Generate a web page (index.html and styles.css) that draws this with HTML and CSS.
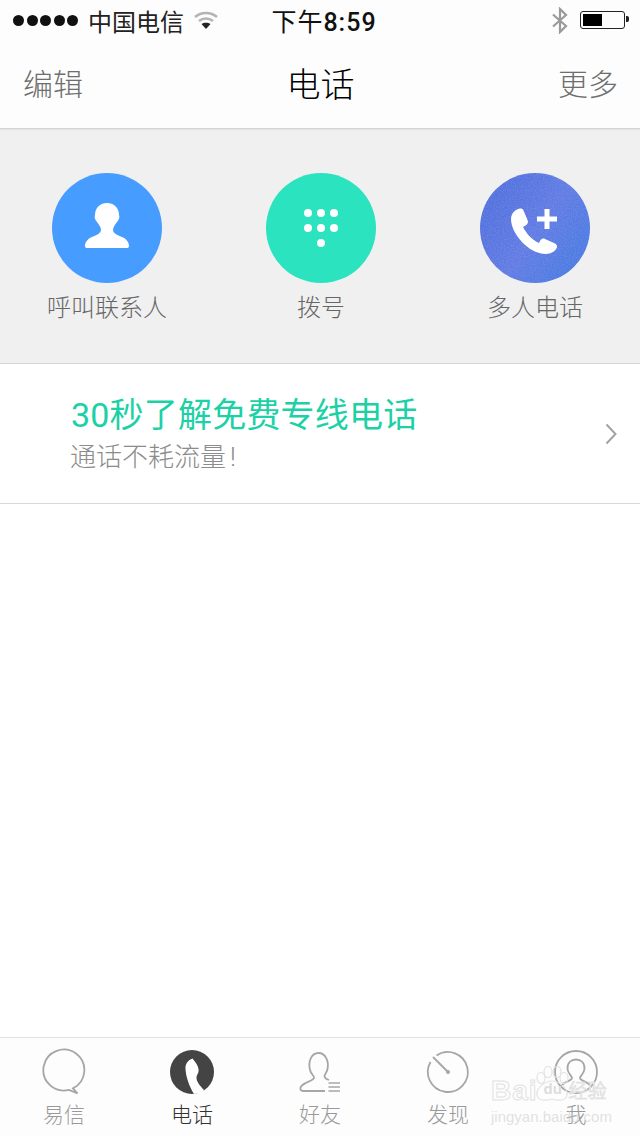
FILE: index.html
```html
<!DOCTYPE html>
<html>
<head>
<meta charset="UTF-8">
<title>电话</title>
<link rel="stylesheet" href="styles.css">
</head>
<body>
<div class="screen">

<header class="top">
	<div class="status">
		<div class="status-left">
			<span class="signal"><i></i><i></i><i></i><i></i><i></i></span>
			<span class="carrier">中国电信</span>
			<svg class="wifi" width="26" height="20" viewBox="0 0 26 20">
				<path d="M2 7 C8 1.500 18 1.500 24 7" fill="none" stroke="#b4b4b4" stroke-width="2.500"/>
				<path d="M6 11 C10 7.500 16 7.500 20 11" fill="none" stroke="#b4b4b4" stroke-width="2.500"/>
				<path d="M8.500 14 L13 19 L17.500 14 C15 12.300 11 12.300 8.500 14Z" fill="#222"/>
			</svg>
		</div>
		<div class="status-time">下午<span class="status-digits">8:59</span></div>
		<div class="status-right">
			<svg class="bt" width="18" height="27" viewBox="0 0 18 27">
				<path d="M2 7.500 L15 19 L9 25 V2 L15 8 L2 19.500" fill="none" stroke="#9a9a9a" stroke-width="2.200"/>
			</svg>
			<span class="battery"><span class="battery-level"></span></span>
		</div>
	</div>
	<nav class="nav">
		<a class="nav-btn">编辑</a>
		<h1 class="nav-title">电话</h1>
		<a class="nav-btn">更多</a>
	</nav>
</header>

<section class="actions">
	<div class="action">
		<svg class="action-icon" width="110" height="110" viewBox="0 0 110 110">
			<circle cx="55" cy="55" r="55" fill="#479cff"/>
			<path fill="#fff" d="M55 30 C63 30 67 36 67 42 C68 44 67 47 65 49 C63 52 61 54 61 57 C61 60 65 62 70 64 C75 66 77 70 77 73 C77 74.500 76 75 75 75 L35 75 C34 75 33 74.500 33 73 C33 70 35 66 40 64 C45 62 49 60 49 57 C49 54 47 52 45 49 C43 47 42 44 43 42 C43 36 47 30 55 30Z"/>
		</svg>
		<span class="action-label">呼叫联系人</span>
	</div>
	<div class="action">
		<svg class="action-icon" width="110" height="110" viewBox="0 0 110 110">
			<circle cx="55" cy="55" r="55" fill="#2be3be"/>
			<g fill="#fff">
				<circle cx="42" cy="40" r="4"/><circle cx="55" cy="40" r="4"/><circle cx="68" cy="40" r="4"/>
				<circle cx="42" cy="55" r="4"/><circle cx="55" cy="55" r="4"/><circle cx="68" cy="55" r="4"/>
				<circle cx="55" cy="70" r="4"/>
			</g>
		</svg>
		<span class="action-label">拨号</span>
	</div>
	<div class="action">
		<svg class="action-icon" width="110" height="110" viewBox="0 0 110 110">
			<defs>
				<linearGradient id="blueWash" x1="0" y1="0.200" x2="1" y2="0.900">
					<stop offset="0" stop-color="#4e6edd"/>
					<stop offset="0.500" stop-color="#5f7ae3"/>
					<stop offset="1" stop-color="#4479e2"/>
				</linearGradient>
				<filter id="grain" x="0" y="0" width="100%" height="100%">
					<feTurbulence type="fractalNoise" baseFrequency="0.9" numOctaves="2" seed="4"/>
					<feColorMatrix values="0 0 0 0 1  0 0 0 0 1  0 0 0 0 1  0 0 0 0.250 -0.080"/>
					<feComposite in2="SourceGraphic" operator="in"/>
				</filter>
			</defs>
			<circle cx="55" cy="55" r="55" fill="url(#blueWash)"/>
			<circle cx="55" cy="55" r="55" filter="url(#grain)"/>
			<path fill="#fff" d="M40 35.500 C35 36 31 41 31 46 C31 60 48 81 66 81 C71 81 76 78 77 74 C77.500 72 76 71 74 70 L65 66 C63 65 61 66 60 68 L59 70 C52 67 46 60 43 54 L45.500 52.500 C48 51 48.500 49 47.500 47 L43.500 37.500 C43 36 42 35.500 40 35.500Z"/>
			<path fill="#fff" d="M64.500 36 H69.500 V43.500 H77 V48.500 H69.500 V56 H64.500 V48.500 H57 V43.500 H64.500Z"/>
		</svg>
		<span class="action-label">多人电话</span>
	</div>
</section>

<a class="promo">
	<div class="promo-text">
		<div class="promo-title">30秒了解免费专线电话</div>
		<div class="promo-sub">通话不耗流量<span class="promo-bang">!</span></div>
	</div>
	<svg class="chevron" width="12" height="22" viewBox="0 0 12 22">
		<path d="M1.500 1.500 L10.500 11 L1.500 20.500" fill="none" stroke="#a2a2a2" stroke-width="2"/>
	</svg>
</a>

<div class="blank"></div>

<footer class="tabs">
	<div class="tab">
		<svg width="48" height="48" viewBox="0 0 48 48" class="tab-icon">
			<path d="M29 41.900 A20.500 20.500 0 1 1 33 40.400 L37.500 45.300 Z" fill="none" stroke="#a6a6a6" stroke-width="1.800"/>
		</svg>
		<span class="tab-label">易信</span>
	</div>
	<div class="tab tab-on">
		<svg width="48" height="48" viewBox="0 0 48 48" class="tab-icon">
			<circle cx="24" cy="24" r="22" fill="#444"/>
			<path fill="#fff" d="M24.500 10.500 C20 12 17 16 17.500 21 C18 29 21 38 26 46 L34 44.500 L36 42 C32 38 28 33 28.500 29 C29 26 31 25 30.500 21 C30 17 27 14 24.500 10.500Z"/>
		</svg>
		<span class="tab-label">电话</span>
	</div>
	<div class="tab">
		<svg width="48" height="48" viewBox="0 0 48 48" class="tab-icon">
			<path d="M29 43 H7 C4 43 3.500 40 5.500 38 C9 34 17 33 18 30 C18.500 28 15 26 14 22 C12 14 15 5 22.500 5 C30 5 33 14 31.500 21 C31 24 29 26 28.500 28 C28.500 30 30 31 33 32" fill="none" stroke="#a6a6a6" stroke-width="1.800"/>
			<path d="M32.500 35 H44 M32.500 39 H44 M32.500 43 H44" fill="none" stroke="#a6a6a6" stroke-width="1.600"/>
		</svg>
		<span class="tab-label">好友</span>
	</div>
	<div class="tab">
		<svg width="48" height="48" viewBox="0 0 48 48" class="tab-icon">
			<path d="M12.500 7.500 A20 20 0 1 1 6.500 14" fill="none" stroke="#a6a6a6" stroke-width="1.800"/>
			<path d="M9 9 L24 24" stroke="#a6a6a6" stroke-width="1.800"/>
			<circle cx="24" cy="24" r="2" fill="#a6a6a6"/>
		</svg>
		<span class="tab-label">发现</span>
	</div>
	<div class="tab">
		<svg width="48" height="48" viewBox="0 0 48 48" class="tab-icon">
			<circle cx="24" cy="24" r="21" fill="none" stroke="#a6a6a6" stroke-width="1.800"/>
			<path d="M9 38 C13 33 20 33 20 30 C20 28 16 26 15.500 21 C15 15 19 11.500 24 11.500 C29 11.500 33 15 32.500 21 C32 26 28 28 28 30 C28 33 35 33 39 38" fill="none" stroke="#a6a6a6" stroke-width="1.800"/>
		</svg>
		<span class="tab-label">我</span>
	</div>
</footer>

<!-- 水印 -->
<div class="mark">
	<div class="mark-row">
		<span class="mark-bai">Bai</span>
		<span class="mark-paw">
			<svg width="34" height="40" viewBox="0 0 34 40">
				<g fill="none" stroke="#e2e2e2" stroke-width="1.200">
					<ellipse cx="6" cy="12" rx="4" ry="5.500"/>
					<ellipse cx="13" cy="6" rx="4" ry="5.500"/>
					<ellipse cx="22" cy="6" rx="4" ry="5.500"/>
					<ellipse cx="29" cy="12" rx="4" ry="5.500"/>
					<path d="M17 15 C24 15 33 22 32 29 C31 35 24 35 17 33 C10 35 3 35 2 29 C1 22 10 15 17 15Z"/>
				</g>
			</svg>
			<span class="mark-du">du</span>
		</span>
		<span class="mark-jy">经验</span>
	</div>
	<div class="mark-url">jingyan.baidu.com</div>
</div>

</div>
</body>
</html>
```

FILE: styles.css
```css
html, body {
  margin: 0;
  padding: 0;
  background: #fff;
}
body {
  font-family: Roboto, "Noto Sans CJK SC", sans-serif;
  font-weight: 300;
}
.screen {
  position: relative;
  width: 640px;
  height: 1136px;
  overflow: hidden;
  display: flex;
  flex-direction: column;
}

/* 상단 */
.top {
  height: 128px;
  flex: none;
  background: #fdfdfd;
  border-bottom: 1px solid #d4d4d4;
  box-shadow: 0 1px 2px rgba(0,0,0,.06);
  position: relative;
}
.status {
  height: 40px;
  display: grid;
  grid-template-columns: 1fr auto 1fr;
  align-items: center;
  color: #111;
}
.status-left {
  display: flex;
  align-items: center;
  padding-left: 13px;
}
.signal {
  display: flex;
  gap: 2.500px;
}
.signal i {
  width: 11px;
  height: 11px;
  border-radius: 50%;
  background: #111;
}
.carrier {
  font-size: 24px;
  font-weight: 400;
  margin-left: 10px;
  color: #222;
}
.wifi {
  margin-left: 9px;
}
.status-time {
  font-size: 25px;
  font-weight: 400;
  letter-spacing: 1px;
  margin-left: 8px;
}
.status-digits {
  font-weight: 500;
}
.status-right {
  display: flex;
  align-items: center;
  justify-content: flex-end;
  padding-right: 15px;
}
.bt {
  margin-right: 11px;
}
.battery {
  position: relative;
  display: block;
  width: 39px;
  height: 12px;
  border: 1px solid #222;
  border-radius: 3px;
  padding: 2px;
}
.battery::after {
  content: "";
  position: absolute;
  right: -5px;
  top: 4px;
  width: 3px;
  height: 6px;
  background: #222;
  border-radius: 0 2px 2px 0;
}
.battery-level {
  display: block;
  width: 19px;
  height: 100%;
  background: #000;
}
.nav {
  height: 88px;
  box-sizing: border-box;
  display: flex;
  align-items: center;
  justify-content: space-between;
  padding: 0 22px 4px 23px;
}
.nav-btn {
  font-size: 30px;
  color: #6e6e6e;
}
.nav-title {
  font-size: 34px;
  font-weight: 300;
  color: #000;
  margin: 0;
}

/* 버튼 */
.actions {
  height: 235px;
  flex: none;
  box-sizing: border-box;
  background: #f0f0f0;
  border-bottom: 1px solid #d6d6d6;
  padding-top: 44px;
  display: grid;
  grid-template-columns: repeat(3, 214px);
}
.action {
  display: flex;
  flex-direction: column;
  align-items: center;
}
.action-icon {
  display: block;
}
.action-label {
  font-size: 24px;
  line-height: 34px;
  margin-top: 8px;
  color: #666;
}

.promo {
  height: 139px;
  flex: none;
  border-bottom: 1px solid #d8d8d8;
  display: flex;
  align-items: center;
  justify-content: space-between;
  padding: 0 23px 0 70px;
}
.promo-title {
  font-size: 34px;
  font-weight: 400;
  letter-spacing: 0.200px;
  line-height: 46px;
  color: #1bd1a5;
  margin-left: 1px;
}
.promo-sub {
  font-size: 26px;
  line-height: 38px;
  color: #8c8c8c;
}
.promo-bang {
  margin-left: 4px;
}

.blank {
  flex: 1;
}

/* 탭 */
.tabs {
  height: 99px;
  flex: none;
  box-sizing: border-box;
  border-top: 1px solid #e2e2e2;
  background: #fdfdfd;
  display: grid;
  grid-template-columns: repeat(5, 128px);
  padding-top: 10px;
}
.tab {
  display: flex;
  flex-direction: column;
  align-items: center;
}
.tab-icon {
  display: block;
}
.tab-label {
  font-size: 21px;
  line-height: 30px;
  margin-top: 4px;
  color: #999;
}
.tab-on .tab-label {
  color: #333;
}

/* 워터마크 */
.mark {
  position: absolute;
  left: 491px;
  top: 1064px;
  width: 116px;
  font-family: "Liberation Sans", "Noto Sans CJK SC", sans-serif;
  color: transparent;
  pointer-events: none;
}
.mark-row {
  display: flex;
  align-items: flex-end;
  height: 42px;
}
.mark-bai {
  font-size: 28px;
  line-height: 30px;
  font-weight: 700;
  letter-spacing: 1px;
  -webkit-text-stroke: 1px #e2e2e2;
}
.mark-paw {
  position: relative;
  width: 34px;
  height: 40px;
  margin-left: -3px;
}
.mark-du {
  position: absolute;
  left: 9px;
  bottom: 9px;
  font-size: 15px;
  font-weight: 700;
  color: #dcdcdc;
}
.mark-jy {
  font-size: 19px;
  line-height: 28px;
  -webkit-text-stroke: 1px #e2e2e2;
}
.mark-url {
  font-size: 15px;
  line-height: 18px;
  margin-top: 2px;
  white-space: nowrap;
  color: rgba(205,205,205,.6);
}
```
